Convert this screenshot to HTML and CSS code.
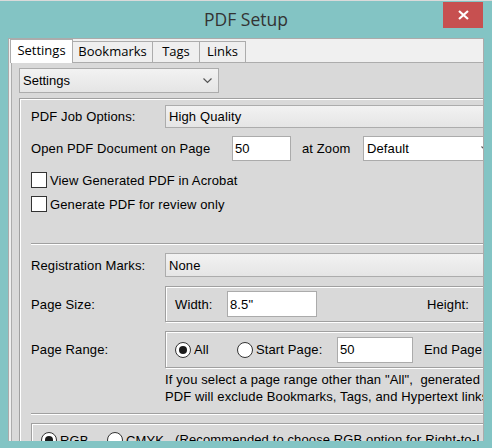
FILE: index.html
```html
<!DOCTYPE html>
<html lang="en">
<head>
    <meta charset="UTF-8">
    <title>PDF Setup</title>
    <link rel="stylesheet" href="styles.css">
</head>
<body>
    <div class="window">
        <div class="titlebar">
            <h1 class="title">PDF Setup</h1>
            <div class="close">
                <svg width="11" height="10" viewBox="0 0 11 10"><path d="M1 1 L10 9 M10 1 L1 9" stroke="#fff" stroke-width="2.2" fill="none"/></svg>
            </div>
        </div>

        <div class="client">
            <div class="tabs">
                <div class="tab active w-settings">Settings</div>
                <div class="tab w-bookmarks">Bookmarks</div>
                <div class="tab w-tags">Tags</div>
                <div class="tab w-links">Links</div>
            </div>

            <div class="tab-page">
                <div class="select section-select">
                    <span>Settings</span>
                    <svg width="9" height="6" viewBox="0 0 9 6"><path d="M0.5 0.5 L4.5 4.5 L8.5 0.5" fill="none" stroke="#555" stroke-width="1.2"/></svg>
                </div>

                <div class="group">
                    <div class="row row-job">
                        <span class="label">PDF Job Options:</span>
                        <div class="select job-select">High Quality</div>
                    </div>

                    <div class="row row-open">
                        <span class="label label-open">Open PDF Document on Page</span>
                        <div class="field field-page">50</div>
                        <span class="label-zoom">at Zoom</span>
                        <div class="select white zoom-select">
                            <span>Default</span>
                            <svg width="9" height="6" viewBox="0 0 9 6"><path d="M0.5 0.5 L4.5 4.5 L8.5 0.5" fill="none" stroke="#555" stroke-width="1.2"/></svg>
                        </div>
                    </div>

                    <div class="check first"><span class="box"></span>View Generated PDF in Acrobat</div>
                    <div class="check"><span class="box"></span>Generate PDF for review only</div>

                    <div class="separator sep-top"></div>

                    <div class="row row-reg">
                        <span class="label">Registration Marks:</span>
                        <div class="select job-select">None</div>
                    </div>

                    <div class="row row-size">
                        <span class="label">Page Size:</span>
                        <div class="frame size-frame">
                            <span class="label-width">Width:</span>
                            <div class="field field-width">8.5"</div>
                            <span class="label-height">Height:</span>
                        </div>
                    </div>

                    <div class="row row-range">
                        <span class="label">Page Range:</span>
                        <div class="frame range-frame">
                            <span class="option opt-all"><span class="radio on"></span>All</span>
                            <span class="option opt-start"><span class="radio"></span>Start Page:</span>
                            <div class="field field-start">50</div>
                            <span class="label-end">End Page</span>
                        </div>
                    </div>

                    <p class="note">If you select a page range other than "All",&nbsp; generated<br>PDF will exclude Bookmarks, Tags, and Hypertext links.</p>

                    <div class="separator sep-bottom"></div>

                    <div class="frame color-frame">
                        <span class="option opt-rgb"><span class="radio on"></span>RGB</span>
                        <span class="option opt-cmyk"><span class="radio"></span>CMYK</span>
                        <span>(Recommended to choose RGB option for Right-to-Left languages)</span>
                    </div>
                </div>
            </div>
        </div>
    </div>
</body>
</html>
```

FILE: styles.css
```css
* {
    box-sizing: border-box;
}

body {
    margin: 0;
    font-family: "Liberation Sans", Arial, sans-serif;
    font-size: 13px;
    color: #000;
}

.window {
    width: 492px;
    height: 448px;
    background: #83c4c4;
    border-top: 1px solid #dadada;
    display: flex;
    flex-direction: column;
    overflow: hidden;
}

/* title bar */
.titlebar {
    height: 37px;
    display: grid;
    grid-template-columns: 1fr auto 1fr;
    flex-shrink: 0;
}

.title {
    grid-column: 2;
    margin: 0;
    font-family: "Open Sans", sans-serif;
    font-weight: 400;
    font-size: 17.5px;
    line-height: 37px;
    color: #333;
}

.close {
    grid-column: 3;
    justify-self: end;
    align-self: start;
    margin: 1px 9px 0 0;
    width: 40px;
    height: 26px;
    background: #c75050;
    display: flex;
    align-items: center;
    justify-content: center;
}

/* client area */
.client {
    margin: 0 8px;
    height: 403px;
    background: #f0f0f0;
    border: 1px solid #ababab;
    border-bottom: none;
    overflow: hidden;
    display: flex;
    flex-direction: column;
}

.tabs {
    display: flex;
    align-items: flex-end;
    height: 23px;
    padding-left: 1px;
    flex-shrink: 0;
}

.tab {
    height: 21px;
    border: 1px solid #acacac;
    border-bottom: none;
    background: #efefef;
    margin-left: -1px;
    font-family: "Open Sans", sans-serif;
    font-size: 13px;
    line-height: 19px;
    text-align: center;
}

.tab:first-child {
    margin-left: 0;
}

.tab.active {
    height: 24px;
    margin-bottom: -1px;
    background: #fff;
    position: relative;
    z-index: 1;
    line-height: 20px;
}

.w-settings { width: 63px; }
.w-bookmarks { width: 81px; }
.w-tags { width: 48px; }
.w-links { width: 47px; }

.tab-page {
    flex: 1;
    margin-left: 2px;
    border-top: 1px solid #acacac;
    border-left: 1px solid #acacac;
    background: #d9d9d9;
    overflow: hidden;
}

/* controls */
.select {
    border: 1px solid #acacac;
    background: linear-gradient(#f2f2f2, #e5e5e5);
    padding: 0 6px 0 3px;
    display: flex;
    align-items: center;
    justify-content: space-between;
    flex-shrink: 0;
}

.select.white {
    background: #fff;
    border-color: #ababab;
}

.field {
    border: 1px solid #ababab;
    background: #fff;
    padding-left: 2px;
    display: flex;
    align-items: center;
    flex-shrink: 0;
}

.section-select {
    width: 200px;
    height: 25px;
    margin: 5px 0 0 7px;
}

.group {
    width: 640px;
    margin: 5px 0 0 7px;
    border: 1px solid #a0a0a0;
    box-shadow: inset 1px 1px 0 #fff;
    padding: 6px 0 0 11px;
    height: 400px;
    letter-spacing: 0.12px;
}

.row {
    display: flex;
    align-items: center;
}

.label {
    width: 134px;
    flex-shrink: 0;
}

.row-job {
    height: 23px;
}

.job-select {
    width: 460px;
    height: 100%;
}

.row-open {
    margin-top: 8px;
    height: 25px;
}

.label-open {
    width: 201px;
}

.field-page {
    width: 59px;
    height: 25px;
}

.label-zoom {
    width: 72px;
    padding-left: 11px;
    flex-shrink: 0;
}

.zoom-select {
    width: 134px;
    height: 25px;
}

.check {
    display: flex;
    align-items: center;
    height: 16px;
    margin-top: 8px;
}

.check.first {
    margin-top: 11px;
}

.box {
    width: 16px;
    height: 16px;
    border: 1px solid #333;
    background: #fff;
    margin-right: 3px;
}

.separator {
    height: 2px;
    border-top: 1px solid #a0a0a0;
    border-bottom: 1px solid #fff;
}

.sep-top {
    margin-top: 31px;
}

.row-reg {
    margin-top: 8px;
    height: 24px;
}

.frame {
    border: 1px solid #a0a0a0;
    box-shadow: inset 1px 1px 0 #fff, 1px 1px 0 #fff;
    display: flex;
    align-items: center;
    flex-shrink: 0;
    white-space: nowrap;
}

.row-size {
    margin-top: 9px;
}

.size-frame {
    width: 460px;
    height: 36px;
    padding-left: 9px;
}

.label-width {
    width: 52px;
}

.field-width {
    width: 90px;
    height: 26px;
}

.label-height {
    margin-left: 110px;
}

.row-range {
    margin-top: 9px;
}

.range-frame {
    width: 460px;
    height: 37px;
    padding-left: 9px;
}

.option {
    display: flex;
    align-items: center;
    flex-shrink: 0;
}

.radio {
    width: 16px;
    height: 16px;
    border: 1px solid #333;
    border-radius: 50%;
    background: #fff;
    margin-right: 3px;
    display: flex;
    align-items: center;
    justify-content: center;
}

.radio.on::after {
    content: '';
    width: 8px;
    height: 8px;
    border-radius: 50%;
    background: #1a1a1a;
}

.opt-all { width: 62px; }
.opt-start { width: 100px; }

.field-start {
    width: 76px;
    height: 26px;
}

.label-end {
    margin-left: 11px;
}

.note {
    margin: 3px 0 0 134px;
    line-height: 17px;
    white-space: nowrap;
}

.sep-bottom {
    margin-top: 8px;
}

.color-frame {
    margin-top: 8px;
    width: 600px;
    height: 40px;
    padding: 8px 0 0 9px;
    align-items: flex-start;
}

.opt-rgb { width: 66px; }
.opt-cmyk { width: 68px; }
```
